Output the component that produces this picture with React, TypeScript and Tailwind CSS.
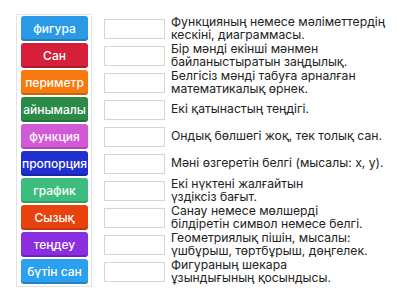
const items = [
  { word: 'фигура', color: 'bg-[#2b9ae6]', def: ['Функцияның немесе мәліметтердің', 'кескіні, диаграммасы.'] },
  { word: 'Сан', color: 'bg-[#d61f3a]', def: ['Бір мәнді екінші мәнмен', 'байланыстыратын заңдылық.'] },
  { word: 'периметр', color: 'bg-[#f67a0e]', def: ['Белгісіз мәнді табуға арналған', 'математикалық өрнек.'] },
  { word: 'айнымалы', color: 'bg-[#2b8a48]', def: ['Екі қатынастың теңдігі.'] },
  { word: 'функция', color: 'bg-[#d35ad6]', def: ['Ондық бөлшегі жоқ, тек толық сан.'] },
  { word: 'пропорция', color: 'bg-[#1f2fd0]', def: ['Мәні өзгеретін белгі (мысалы: x, y).'] },
  { word: 'график', color: 'bg-[#3dbd7d]', def: ['Екі нүктені жалғайтын', 'үздіксіз бағыт.'] },
  { word: 'Сызық', color: 'bg-[#e8430e]', def: ['Санау немесе мөлшерді', 'білдіретін символ немесе белгі.'] },
  { word: 'теңдеу', color: 'bg-[#8a2ee0]', def: ['Геометриялық пішін, мысалы:', 'үшбұрыш, төртбұрыш, дөңгелек.'] },
  { word: 'бүтін сан', color: 'bg-[#2aa0ee]', def: ['Фигураның шекара', 'ұзындығының қосындысы.'] },
]

export default function App() {
  return (
    <div className="w-[400px] h-[300px] bg-white flex items-start pt-[14px] pl-[16px] font-['Inter',sans-serif]">
      {/* word tiles */}
      <div className="w-[76px] border border-[#e4e4e4] pt-[1px] pb-[2px] pl-[4px] pr-[3px] flex flex-col gap-[2px]">
        {items.map((it) => (
          <div
            key={it.word}
            className={`${it.color} h-[25px] rounded-[3px] flex items-center justify-center text-white text-[12px] font-medium shadow-[inset_0_-2px_0_rgba(0,0,0,0.18)]`}
          >
            {it.word}
          </div>
        ))}
      </div>

      {/* drop slots + definitions */}
      <div className="flex flex-col gap-[2px] ml-[12px] pt-[2px]">
        {items.map((it) => (
          <div key={it.word} className="h-[25px] flex items-center">
            <div className="w-[61px] h-[20px] border border-[#d4d4d4] bg-white shrink-0" />
            <div className="ml-[6px] text-[12.2px] leading-[12.5px] text-[#222] whitespace-nowrap">
              {it.def.map((line) => (
                <div key={line}>{line}</div>
              ))}
            </div>
          </div>
        ))}
      </div>
    </div>
  )
}
